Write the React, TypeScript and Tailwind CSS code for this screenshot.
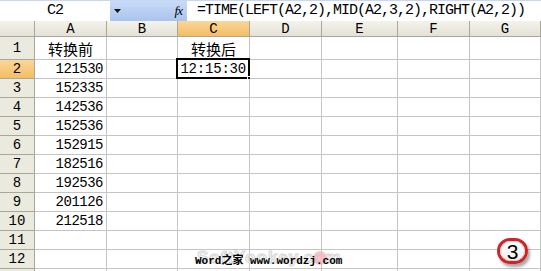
import React from 'react';

const cols = [
    { key: 'A', w: 'w-[72px]' },
    { key: 'B', w: 'w-[71px]' },
    { key: 'C', w: 'w-[72px]' },
    { key: 'D', w: 'w-[72px]' },
    { key: 'E', w: 'w-[76px]' },
    { key: 'F', w: 'w-[72px]' },
    { key: 'G', w: 'w-[71px]' },
];

const values = ['121530', '152335', '142536', '152536', '152915', '182516', '192536', '201126', '212518'];

const mono = 'font-["Liberation_Mono","Noto_Sans_CJK_SC",monospace]';
const cjk = 'font-["Noto_Sans_CJK_SC","Liberation_Sans",sans-serif]';

function FormulaBar() {
    return (
        <div className="flex h-[21px] border-t border-[#c6d7f2] bg-[#b7cdf1]">
            <div className={`w-[110px] bg-white flex items-center justify-center text-[15px] tracking-[-1px] text-black ${mono}`}>
                C2
            </div>
            <div className="w-[77px] flex items-center bg-gradient-to-b from-[#c9dbf7] to-[#a9c4ee]">
                <svg className="ml-[4px]" width="7" height="4" viewBox="0 0 7 4">
                    <path d="M0 0h7L3.5 4z" fill="#111" />
                </svg>
                <span className="ml-auto mr-[5px] font-['Liberation_Serif',serif] italic text-[13px] text-black tracking-[-1px]">
                    fx
                </span>
            </div>
            <div className={`flex-1 bg-white flex items-center pl-[10px] text-[15px] tracking-[-1px] text-black ${mono}`}>
                =TIME(LEFT(A2,2),MID(A2,3,2),RIGHT(A2,2))
            </div>
        </div>
    );
}

function HeaderRow() {
    return (
        <div className="flex h-[16px]">
            <div className="w-[35px] border-r border-b border-[#a9a799] bg-gradient-to-b from-[#f4f3ec] to-[#e4e2d6]" />
            {cols.map((c) => (
                <div
                    key={c.key}
                    className={`${c.w} shrink-0 border-r border-b border-[#a9a799] flex items-center justify-center text-[14px] leading-none text-black ${mono} ${
                        c.key === 'C'
                            ? 'bg-gradient-to-b from-[#fad69a] to-[#f3bd62]'
                            : 'bg-gradient-to-b from-[#f4f3ec] to-[#e4e2d6]'
                    }`}
                >
                    {c.key}
                </div>
            ))}
        </div>
    );
}

function Row({ n, h, hideLabel, children }: { n: number; h: string; hideLabel?: boolean; children?: Record<string, React.ReactNode> }) {
    const active = n === 2;
    return (
        <div className={`flex ${h}`}>
            <div
                className={`w-[35px] shrink-0 border-r border-b border-[#a9a799] flex items-center justify-center text-[14px] text-black ${mono} ${
                    active ? 'bg-gradient-to-b from-[#fad69a] to-[#f3bd62]' : 'bg-[#ebeadf]'
                }`}
            >
                {hideLabel ? null : n}
            </div>
            {cols.map((c) => (
                <div
                    key={c.key}
                    className={`${c.w} shrink-0 border-r border-b border-[#c4c4c4] bg-white relative flex items-center`}
                >
                    {children?.[c.key]}
                </div>
            ))}
        </div>
    );
}

function Num({ v }: { v: string }) {
    return (
        <span className={`ml-auto mr-[3px] text-[14px] tracking-[-0.5px] text-black ${mono}`}>{v}</span>
    );
}

function Label({ v }: { v: string }) {
    return <span className={`mx-auto text-[15px] leading-none text-black ${cjk}`}>{v}</span>;
}

export default function App() {
    return (
        <div className="relative w-[541px] h-[271px] overflow-hidden bg-white">
            <FormulaBar />
            <HeaderRow />
            <Row n={1} h="h-[23px]">
                {{ A: <Label v="转换前" />, C: <Label v="转换后" /> }}
            </Row>
            <Row n={2} h="h-[19px]">
                {{
                    A: <Num v={values[0]} />,
                    C: (
                        <>
                            <span className={`ml-auto mr-[3px] text-[14px] tracking-[-0.2px] text-black ${mono}`}>
                                12:15:30
                            </span>
                            <div className="absolute -left-[2px] -top-[2px] -right-[1px] -bottom-[1px] border-2 border-black pointer-events-none" />
                            <div className="absolute -right-[3px] -bottom-[3px] w-[5px] h-[5px] bg-black border border-white" />
                        </>
                    ),
                }}
            </Row>
            {values.slice(1).map((v, i) => (
                <Row key={v} n={i + 3} h="h-[19px]">
                    {{ A: <Num v={v} /> }}
                </Row>
            ))}
            <Row n={11} h="h-[19px]" />
            <Row n={12} h="h-[19px]">
                {{
                    C: (
                        <div className="absolute left-[17px] top-[4px] whitespace-nowrap z-10 leading-none text-[11px]">
                            <span className="absolute -top-[5px] left-[2px] font-['Liberation_Sans',sans-serif] font-bold text-[17px] leading-none text-[#f4f4f4] [-webkit-text-stroke:1px_#d6d6d6] tracking-[1px]">
                                SoftYookey.com
                            </span>
                            <span className="absolute -top-[3px] left-[118px] w-[14px] h-[14px] rounded-full bg-[#f3b1b8]/70" />
                            <span className={`relative font-bold text-black leading-none ${mono}`}>
                                Word之家 www.wordzj.com
                            </span>
                        </div>
                    ),
                }}
            </Row>
            <Row n={13} h="h-[19px]" hideLabel />

            <div className="absolute left-[497px] top-[238px] w-[31px] h-[26px] rounded-full bg-gradient-to-b from-white to-[#f1eeee] border-[3px] border-[#c9262c] shadow-[2px_3px_3px_rgba(0,0,0,0.35)] flex items-center justify-center">
                <div className="absolute inset-0 rounded-full border border-[#f7c4c4]" />
                <span className="font-['Liberation_Sans',sans-serif] text-[21px] leading-none text-black">3</span>
            </div>
        </div>
    );
}
